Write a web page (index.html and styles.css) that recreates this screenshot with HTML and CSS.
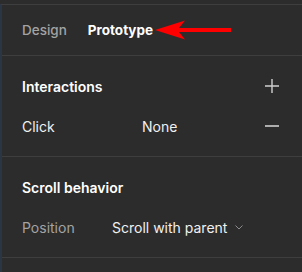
FILE: index.html
```html
<!DOCTYPE html>
<html lang="en">
<head>
  <meta charset="UTF-8" />
  <title>Prototype panel</title>
  <link rel="stylesheet" href="styles.css">
</head>
<body>
  <div class="panel">
    <div class="tabs">
      <span class="tab">Design</span>
      <span class="tab active">Prototype</span>
      <svg class="arrow" width="76" height="20" viewBox="0 0 76 20">
        <polygon points="0,10 30,0.5 24,8 76,8 76,12 24,12 30,19.5" fill="#f00"/>
      </svg>
    </div>
    <div class="section">
      <div class="row head">
        <span class="title">Interactions</span>
        <svg class="icon" width="14" height="14" viewBox="0 0 14 14">
          <path d="M7 0v14M0 7h14" stroke="#cfcfcf" stroke-width="1.4"/>
        </svg>
      </div>
      <div class="row">
        <span class="label">Click</span>
        <span class="value wide">None</span>
        <svg class="icon" width="14" height="14" viewBox="0 0 14 14">
          <path d="M0 7h14" stroke="#e6e6e6" stroke-width="1.4"/>
        </svg>
      </div>
    </div>
    <div class="section">
      <div class="row head">
        <span class="title">Scroll behavior</span>
      </div>
      <div class="row">
        <span class="label muted">Position</span>
        <span class="value">Scroll with parent</span>
        <svg class="chevron" width="8" height="5" viewBox="0 0 8 5">
          <path d="M0.5 0.5L4 4L7.5 0.5" fill="none" stroke="#8a8a8a" stroke-width="1"/>
        </svg>
      </div>
    </div>
  </div>
</body>
</html>
```

FILE: styles.css
```css
:root {
  --bg: #2c2c2c;
  --line: #3e3e3e;
  --text: #f0f0f0;
  --muted: #a3a3a3;
  --font: 'Inter', 'Roboto', sans-serif;
}
* { box-sizing: border-box; margin: 0; padding: 0; }
body {
  background: var(--bg);
  color: var(--text);
  font-family: var(--font);
  font-size: 14px;
  height: 272px;
  overflow: hidden;
}
.panel {
  margin-top: 4px;
  border-top: 1px solid var(--line);
  border-left: 2px solid #2a3644;
  min-height: 268px;
}
.tabs {
  position: relative;
  display: flex; align-items: center; gap: 21px;
  height: 51px;
  padding-left: 20px;
  border-bottom: 1px solid var(--line);
}
.tab { color: var(--muted); font-weight: 500; font-size: 13.5px; }
.tab.active { color: #fff; font-weight: 700; }
.arrow { position: absolute; left: 153px; top: 15px; }
.section {
  display: flex; flex-direction: column; gap: 20px;
  padding: 20px 23px 20px 20px;
  border-bottom: 1px solid var(--line);
}
.row { display: flex; align-items: center; height: 20px; }
.title { font-weight: 600; color: #fff; flex: 1; }
.label { width: 120px; }
.label.muted { width: 90px; color: var(--muted); }
.value.wide { flex: 1; }
.icon { margin-left: auto; }
.chevron { margin-left: 8px; margin-top: 1px; }
```
